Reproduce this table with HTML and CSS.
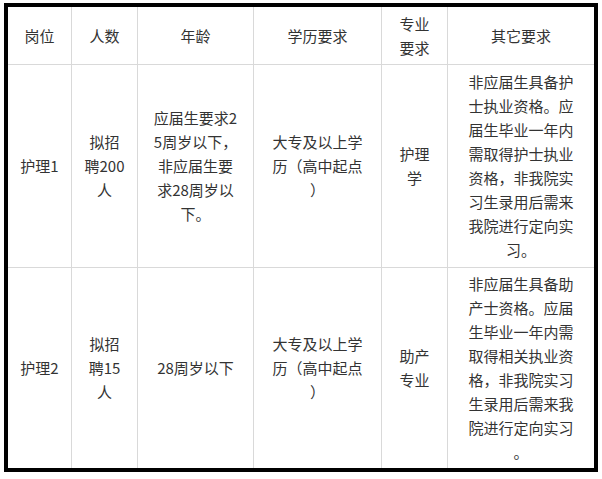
FILE: index.html
```html
<!DOCTYPE html>
<html lang="zh-CN">
<head>
<meta charset="utf-8">
<title>招聘岗位</title>
<link rel="stylesheet" href="styles.css">
</head>
<body>
<div class="wrap">
<table class="jobs">
  <colgroup>
    <col class="c1"><col class="c2"><col class="c3"><col class="c4"><col class="c5"><col class="c6">
  </colgroup>
  <thead>
    <tr class="head">
      <th>岗位</th>
      <th>人数</th>
      <th>年龄</th>
      <th>学历要求</th>
      <th>专业<br>要求</th>
      <th class="last">其它要求</th>
    </tr>
  </thead>
  <tbody>
    <tr class="row1">
      <td>护理1</td>
      <td>拟招<br>聘200<br>人</td>
      <td>应届生要求2<br>5周岁以下，<br>非应届生要<br>求28周岁以<br>下。</td>
      <td>大专及以上学<br>历（高中起点<br>）</td>
      <td>护理<br>学</td>
      <td class="last">非应届生具备护<br>士执业资格。应<br>届生毕业一年内<br>需取得护士执业<br>资格，非我院实<br>习生录用后需来<br>我院进行定向实<br>习。</td>
    </tr>
    <tr class="row2">
      <td>护理2</td>
      <td>拟招<br>聘15<br>人</td>
      <td>28周岁以下</td>
      <td>大专及以上学<br>历（高中起点<br>）</td>
      <td>助产<br>专业</td>
      <td class="last">非应届生具备助<br>产士资格。应届<br>生毕业一年内需<br>取得相关执业资<br>格，非我院实习<br>生录用后需来我<br>院进行定向实习<br>。</td>
    </tr>
  </tbody>
</table>
</div>
</body>
</html>
```

FILE: styles.css
```css
html, body {
  margin: 0;
  padding: 0;
  background: #ffffff;
}

.wrap {
  padding: 3px 0 0 4px;
}

.jobs {
  table-layout: fixed;
  border-collapse: separate;
  border-spacing: 0;
  width: 594px;
  border: 4px solid #000000;
  font-family: "Noto Sans CJK SC", "Microsoft YaHei", sans-serif;
  font-size: 15px;
  line-height: 24px;
  color: #333333;
  background: #ffffff;
}

.c1 { width: 64px; }
.c2 { width: 66px; }
.c3 { width: 116px; }
.c4 { width: 128px; }
.c5 { width: 66px; }
.c6 { width: 146px; }

.jobs th,
.jobs td {
  padding: 0;
  text-align: center;
  vertical-align: middle;
  white-space: nowrap;
  font-weight: normal;
  border-right: 1px solid #d9d9d9;
  border-bottom: 1px solid #d9d9d9;
}

.jobs .last {
  border-right: none;
}

.head th {
  height: 57px;
}

.row1 td {
  height: 202px;
}

.row2 td {
  height: 200px;
  border-bottom: none;
}
```
